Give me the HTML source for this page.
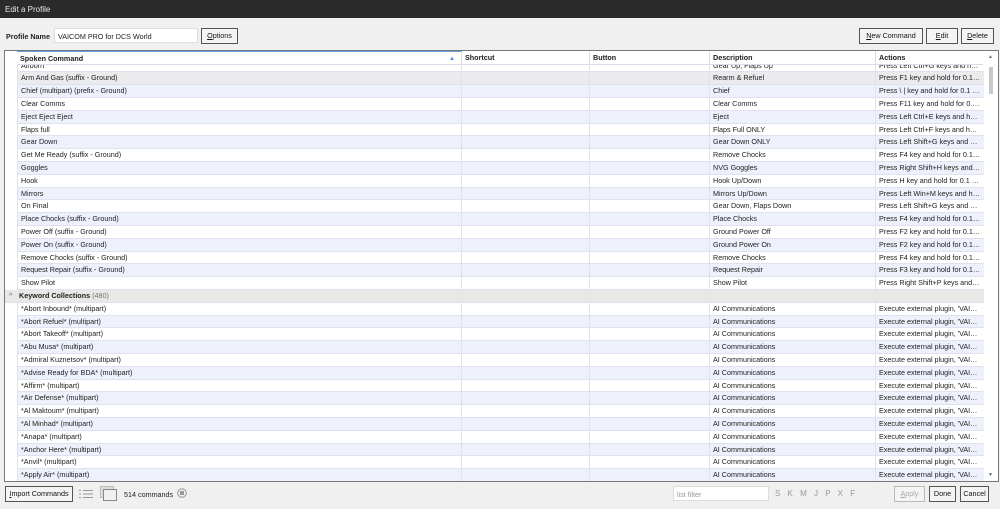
<!DOCTYPE html>
<html><head><meta charset="utf-8"><style>
*{box-sizing:border-box;margin:0;padding:0}
body{width:1000px;height:509px;background:#f0f0f0;font-family:"Liberation Sans",sans-serif;font-size:7.2px;color:#222;position:relative;overflow:hidden}
.abs{position:absolute}
.title{left:0;top:0;width:1000px;height:18px;background:#2b2b2b;color:#e8e8e8;font-size:8px;padding:5px 5px}
.btn{position:absolute;border:1px solid #707070;background:#f4f4f4;font-size:7.2px;text-align:center;line-height:13px;height:15px;color:#111}
.btn.d{border:1.5px solid #555}
.grid{left:4px;top:50px;width:995px;height:432px;border:1px solid #777;background:#fff;overflow:hidden}
.hdr{position:absolute;left:12px;top:0;height:14px;width:966px;background:#fff;border-bottom:1px solid #d8dde8;font-weight:bold;z-index:2}
.hdr div{position:absolute;top:0;height:14px;line-height:14px;padding-left:3px;border-right:1px solid #d8dde8}
.rows{position:absolute;left:0;top:8.6px;width:979px}
.r{height:12.8px;line-height:12.8px;position:relative;border-bottom:1px solid #dde2ee;white-space:nowrap}
.r::before{content:"";position:absolute;left:0;top:0;width:12px;height:13px;background:#fff}
.r span{position:absolute;top:0;overflow:hidden;text-overflow:ellipsis}
.r .c1{left:12px;width:445px;padding-left:3px;border-left:1px solid #dde2ee;border-right:1px solid #dde2ee;height:12.8px}
.r .c2{left:457px;width:128px;border-right:1px solid #dde2ee;height:12.8px}
.r .c3{left:585px;width:120px;border-right:1px solid #dde2ee;height:12.8px}
.r .c4{left:705px;width:166px;padding-left:3px;border-right:1px solid #dde2ee;height:12.8px}
.r .c5{left:871px;width:107px;padding-left:3px;padding-right:2px;height:12.8px}
.b{background:#eef1fb}.w{background:#fff}.g{background:#ebebee}
.grp{background:#e8e8e8;font-weight:bold;height:12.8px;line-height:12.8px;padding-left:14px;position:relative;border-bottom:1px solid #dde2ee}
.grp i{font-style:normal;font-weight:normal;color:#777}
.sb{left:979px;top:0;width:14px;height:430px;background:#fff;z-index:3}
</style></head><body>
<div class="abs title">Edit a Profile</div>
<div class="abs" style="left:6px;top:32px;font-weight:bold">Profile Name</div>
<div class="abs" style="left:54px;top:28px;width:144px;height:15px;background:#fff;border:1px solid #ddd;padding:3px 3px">VAICOM PRO for DCS World</div>
<div class="btn d" style="left:201px;top:28px;width:37px;height:16px"><u>O</u>ptions</div>
<div class="btn d" style="left:859px;top:28px;width:64px;height:16px"><u>N</u>ew Command</div>
<div class="btn d" style="left:926px;top:28px;width:32px;height:16px"><u>E</u>dit</div>
<div class="btn d" style="left:961px;top:28px;width:33px;height:16px"><u>D</u>elete</div>
<div class="abs grid">
<div class="hdr">
<div style="left:0;width:445px;border-top:1px solid #6aa0e0">Spoken Command<span style="position:absolute;right:6px;color:#4a8ad8;font-size:6px">▲</span></div>
<div style="left:445px;width:128px">Shortcut</div>
<div style="left:573px;width:120px">Button</div>
<div style="left:693px;width:166px">Description</div>
<div style="left:859px;width:108px;border-right:none">Actions</div>
</div>
<div class="rows">
<div class="r w"><span class="c1">Airborn</span><span class="c2"></span><span class="c3"></span><span class="c4">Gear Up, Flaps Up</span><span class="c5">Press Left Ctrl+G keys and hold...</span></div>
<div class="r g"><span class="c1">Arm And Gas (suffix - Ground)</span><span class="c2"></span><span class="c3"></span><span class="c4">Rearm &amp; Refuel</span><span class="c5">Press F1 key and hold for 0.1 se...</span></div>
<div class="r b"><span class="c1">Chief (multipart) (prefix - Ground)</span><span class="c2"></span><span class="c3"></span><span class="c4">Chief</span><span class="c5">Press \ | key and hold for 0.1 se...</span></div>
<div class="r w"><span class="c1">Clear Comms</span><span class="c2"></span><span class="c3"></span><span class="c4">Clear Comms</span><span class="c5">Press F11 key and hold for 0.1 s...</span></div>
<div class="r b"><span class="c1">Eject Eject Eject</span><span class="c2"></span><span class="c3"></span><span class="c4">Eject</span><span class="c5">Press Left Ctrl+E keys and hold...</span></div>
<div class="r w"><span class="c1">Flaps full</span><span class="c2"></span><span class="c3"></span><span class="c4">Flaps Full ONLY</span><span class="c5">Press Left Ctrl+F keys and hold...</span></div>
<div class="r b"><span class="c1">Gear Down</span><span class="c2"></span><span class="c3"></span><span class="c4">Gear Down ONLY</span><span class="c5">Press Left Shift+G keys and hold...</span></div>
<div class="r w"><span class="c1">Get Me Ready (suffix - Ground)</span><span class="c2"></span><span class="c3"></span><span class="c4">Remove Chocks</span><span class="c5">Press F4 key and hold for 0.1 se...</span></div>
<div class="r b"><span class="c1">Goggles</span><span class="c2"></span><span class="c3"></span><span class="c4">NVG Goggles</span><span class="c5">Press Right Shift+H keys and ho...</span></div>
<div class="r w"><span class="c1">Hook</span><span class="c2"></span><span class="c3"></span><span class="c4">Hook Up/Down</span><span class="c5">Press H key and hold for 0.1 sec...</span></div>
<div class="r b"><span class="c1">Mirrors</span><span class="c2"></span><span class="c3"></span><span class="c4">Mirrors Up/Down</span><span class="c5">Press Left Win+M keys and hol...</span></div>
<div class="r w"><span class="c1">On Final</span><span class="c2"></span><span class="c3"></span><span class="c4">Gear Down, Flaps Down</span><span class="c5">Press Left Shift+G keys and hold...</span></div>
<div class="r b"><span class="c1">Place Chocks (suffix - Ground)</span><span class="c2"></span><span class="c3"></span><span class="c4">Place Chocks</span><span class="c5">Press F4 key and hold for 0.1 se...</span></div>
<div class="r w"><span class="c1">Power Off (suffix - Ground)</span><span class="c2"></span><span class="c3"></span><span class="c4">Ground Power Off</span><span class="c5">Press F2 key and hold for 0.1 se...</span></div>
<div class="r b"><span class="c1">Power On (suffix - Ground)</span><span class="c2"></span><span class="c3"></span><span class="c4">Ground Power On</span><span class="c5">Press F2 key and hold for 0.1 se...</span></div>
<div class="r w"><span class="c1">Remove Chocks (suffix - Ground)</span><span class="c2"></span><span class="c3"></span><span class="c4">Remove Chocks</span><span class="c5">Press F4 key and hold for 0.1 se...</span></div>
<div class="r b"><span class="c1">Request Repair (suffix - Ground)</span><span class="c2"></span><span class="c3"></span><span class="c4">Request Repair</span><span class="c5">Press F3 key and hold for 0.1 se...</span></div>
<div class="r w"><span class="c1">Show Pilot</span><span class="c2"></span><span class="c3"></span><span class="c4">Show Pilot</span><span class="c5">Press Right Shift+P keys and ho...</span></div>
<div class="grp"><span style="position:absolute;left:4px;font-weight:normal;color:#666">^</span>Keyword Collections <i>(480)</i></div>
<div class="r w"><span class="c1">*Abort Inbound* (multipart)</span><span class="c2"></span><span class="c3"></span><span class="c4">AI Communications</span><span class="c5">Execute external plugin, 'VAICO...</span></div>
<div class="r b"><span class="c1">*Abort Refuel* (multipart)</span><span class="c2"></span><span class="c3"></span><span class="c4">AI Communications</span><span class="c5">Execute external plugin, 'VAICO...</span></div>
<div class="r w"><span class="c1">*Abort Takeoff* (multipart)</span><span class="c2"></span><span class="c3"></span><span class="c4">AI Communications</span><span class="c5">Execute external plugin, 'VAICO...</span></div>
<div class="r b"><span class="c1">*Abu Musa* (multipart)</span><span class="c2"></span><span class="c3"></span><span class="c4">AI Communications</span><span class="c5">Execute external plugin, 'VAICO...</span></div>
<div class="r w"><span class="c1">*Admiral Kuznetsov* (multipart)</span><span class="c2"></span><span class="c3"></span><span class="c4">AI Communications</span><span class="c5">Execute external plugin, 'VAICO...</span></div>
<div class="r b"><span class="c1">*Advise Ready for BDA* (multipart)</span><span class="c2"></span><span class="c3"></span><span class="c4">AI Communications</span><span class="c5">Execute external plugin, 'VAICO...</span></div>
<div class="r w"><span class="c1">*Affirm* (multipart)</span><span class="c2"></span><span class="c3"></span><span class="c4">AI Communications</span><span class="c5">Execute external plugin, 'VAICO...</span></div>
<div class="r b"><span class="c1">*Air Defense* (multipart)</span><span class="c2"></span><span class="c3"></span><span class="c4">AI Communications</span><span class="c5">Execute external plugin, 'VAICO...</span></div>
<div class="r w"><span class="c1">*Al Maktoum* (multipart)</span><span class="c2"></span><span class="c3"></span><span class="c4">AI Communications</span><span class="c5">Execute external plugin, 'VAICO...</span></div>
<div class="r b"><span class="c1">*Al Minhad* (multipart)</span><span class="c2"></span><span class="c3"></span><span class="c4">AI Communications</span><span class="c5">Execute external plugin, 'VAICO...</span></div>
<div class="r w"><span class="c1">*Anapa* (multipart)</span><span class="c2"></span><span class="c3"></span><span class="c4">AI Communications</span><span class="c5">Execute external plugin, 'VAICO...</span></div>
<div class="r b"><span class="c1">*Anchor Here* (multipart)</span><span class="c2"></span><span class="c3"></span><span class="c4">AI Communications</span><span class="c5">Execute external plugin, 'VAICO...</span></div>
<div class="r w"><span class="c1">*Anvil* (multipart)</span><span class="c2"></span><span class="c3"></span><span class="c4">AI Communications</span><span class="c5">Execute external plugin, 'VAICO...</span></div>
<div class="r b"><span class="c1">*Apply Air* (multipart)</span><span class="c2"></span><span class="c3"></span><span class="c4">AI Communications</span><span class="c5">Execute external plugin, 'VAICO...</span></div>
</div>
<div class="abs sb">
<div class="abs" style="left:4px;top:3px;font-size:5px;color:#666">▲</div>
<div class="abs" style="left:5px;top:16px;width:4px;height:27px;background:#c8c8c8"></div>
<div class="abs" style="left:4px;top:421px;font-size:5px;color:#666">▼</div>
</div>
</div>
<div class="btn d" style="left:5px;top:486px;width:68px;height:16px"><u>I</u>mport Commands</div>
<svg class="abs" style="left:79px;top:489px" width="14" height="10"><g stroke="#999" stroke-width="1"><line x1="0" y1="1.5" x2="2" y2="1.5"/><line x1="4" y1="1.5" x2="14" y2="1.5"/><line x1="0" y1="5" x2="2" y2="5"/><line x1="4" y1="5" x2="14" y2="5"/><line x1="0" y1="8.5" x2="2" y2="8.5"/><line x1="4" y1="8.5" x2="14" y2="8.5"/></g></svg>
<svg class="abs" style="left:100px;top:486px" width="18" height="16"><rect x="0.5" y="0.5" width="13" height="11" fill="#ddd" stroke="#bbb"/><rect x="3.5" y="3.5" width="13" height="11" fill="#f0f0f0" stroke="#888"/></svg>
<div class="abs" style="left:124px;top:490px">514 commands</div>
<svg class="abs" style="left:177px;top:488px" width="10" height="10"><circle cx="5" cy="5" r="4.3" fill="none" stroke="#999"/><rect x="3" y="3" width="4" height="4" fill="#999"/></svg>
<div class="abs" style="left:673px;top:486px;width:96px;height:15px;background:#fff;border:1px solid #ddd;padding:3px;color:#999">list filter</div>
<div class="abs" style="left:775px;top:489px;color:#999;font-size:8px;word-spacing:4px;letter-spacing:0.5px">S K M J P X F</div>
<div class="btn" style="left:894px;top:486px;width:31px;height:16px;color:#aaa;border-color:#bbb"><u>A</u>pply</div>
<div class="btn d" style="left:929px;top:486px;width:27px;height:16px">Done</div>
<div class="btn d" style="left:960px;top:486px;width:29px;height:16px">Cancel</div>
</body></html>
